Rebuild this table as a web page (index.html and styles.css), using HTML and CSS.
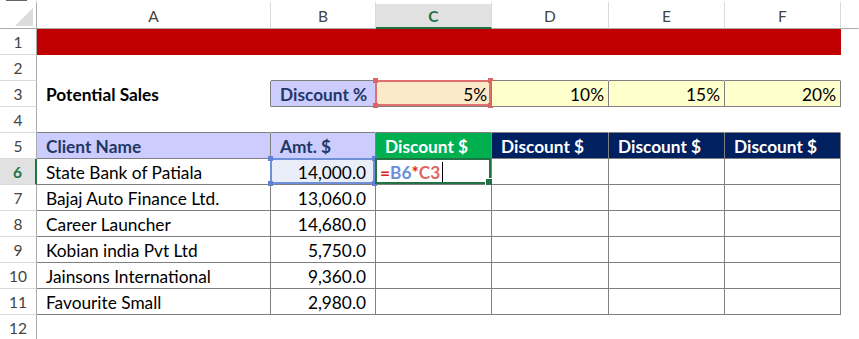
FILE: index.html
```html
<!DOCTYPE html>
<html>
<head>
<meta charset="utf-8">
<link rel="stylesheet" href="styles.css">
</head>
<body>
<div class="sheet">
  <!-- header row -->
  <div class="c ch corner"><svg class="tri" width="18" height="18" viewBox="0 0 18 18"><polygon points="18,0 18,18 0,18" fill="#dcdcdc"/></svg></div>
  <div class="c ch">A</div>
  <div class="c ch">B</div>
  <div class="c ch sel-col">C</div>
  <div class="c ch">D</div>
  <div class="c ch">E</div>
  <div class="c ch">F</div>
  <div class="c ch end"></div>

  <!-- row 1 -->
  <div class="c rh">1</div>
  <div class="c red"></div><div class="c red"></div><div class="c red"></div><div class="c red"></div><div class="c red"></div><div class="c red"></div>
  <div class="c"></div>

  <!-- row 2 -->
  <div class="c rh">2</div>
  <div class="c"></div><div class="c bb"></div><div class="c bb"></div><div class="c bb"></div><div class="c bb"></div><div class="c bb"></div>
  <div class="c"></div>

  <!-- row 3 -->
  <div class="c rh">3</div>
  <div class="c br bold">Potential Sales</div>
  <div class="c box lav navy bold">Discount %</div>
  <div class="c box peach num pct">5%<span class="ref red-ref"><i class="h tl"></i><i class="h tr"></i><i class="h bl"></i><i class="h br2"></i></span></div>
  <div class="c box yel num pct">10%</div>
  <div class="c box yel num pct">15%</div>
  <div class="c box yel num pct">20%</div>
  <div class="c"></div>

  <!-- row 4 -->
  <div class="c rh">4</div>
  <div class="c bb"></div><div class="c bb"></div><div class="c bb"></div><div class="c bb"></div><div class="c bb"></div><div class="c bb"></div>
  <div class="c"></div>

  <!-- row 5 -->
  <div class="c rh">5</div>
  <div class="c box lav navy bold">Client Name</div>
  <div class="c box lav navy bold">Amt. $</div>
  <div class="c box green wh bold">Discount $</div>
  <div class="c box navybg wh bold">Discount $</div>
  <div class="c box navybg wh bold">Discount $</div>
  <div class="c box navybg wh bold">Discount $</div>
  <div class="c"></div>

  <!-- row 6 -->
  <div class="c rh sel-row">6</div>
  <div class="c box">State Bank of Patiala</div>
  <div class="c box num bluefill">14,000.0<span class="ref blue-ref"><i class="h tl"></i><i class="h tr"></i><i class="h bl"></i><i class="h br2"></i></span></div>
  <div class="c box formula"><span class="f-eq">=</span><span class="f-b">B6</span><span class="f-op">*</span><span class="f-c">C3</span><span class="caret"></span><span class="active"><i class="h br2"></i></span></div>
  <div class="c box"></div><div class="c box"></div><div class="c box"></div>
  <div class="c"></div>

  <!-- row 7 -->
  <div class="c rh">7</div>
  <div class="c box">Bajaj Auto Finance Ltd.</div>
  <div class="c box num">13,060.0</div>
  <div class="c box"></div><div class="c box"></div><div class="c box"></div><div class="c box"></div>
  <div class="c"></div>

  <!-- row 8 -->
  <div class="c rh">8</div>
  <div class="c box">Career Launcher</div>
  <div class="c box num">14,680.0</div>
  <div class="c box"></div><div class="c box"></div><div class="c box"></div><div class="c box"></div>
  <div class="c"></div>

  <!-- row 9 -->
  <div class="c rh">9</div>
  <div class="c box">Kobian india Pvt Ltd</div>
  <div class="c box num">5,750.0</div>
  <div class="c box"></div><div class="c box"></div><div class="c box"></div><div class="c box"></div>
  <div class="c"></div>

  <!-- row 10 -->
  <div class="c rh">10</div>
  <div class="c box">Jainsons International</div>
  <div class="c box num">9,360.0</div>
  <div class="c box"></div><div class="c box"></div><div class="c box"></div><div class="c box"></div>
  <div class="c"></div>

  <!-- row 11 -->
  <div class="c rh">11</div>
  <div class="c box">Favourite Small</div>
  <div class="c box num">2,980.0</div>
  <div class="c box"></div><div class="c box"></div><div class="c box"></div><div class="c box"></div>
  <div class="c"></div>

  <!-- row 12 -->
  <div class="c rh">12</div>
  <div class="c"></div><div class="c"></div><div class="c"></div><div class="c"></div><div class="c"></div><div class="c"></div>
  <div class="c"></div>
</div>
</body>
</html>
```
FILE: styles.css
```css
html, body {
  margin: 0;
  padding: 0;
  background: #fff;
  overflow: hidden;
}
body {
  font-family: Lato, "Open Sans", sans-serif;
  font-size: 17.3px;
  color: #000;
}
.sheet {
  display: grid;
  grid-template-columns: 37px 234px 105px 116px 117px 116px 116px 18px;
  grid-template-rows: 29px repeat(12, 26px);
  width: 859px;
}
.c {
  box-sizing: border-box;
  border-right: 1px solid transparent;
  border-bottom: 1px solid transparent;
  display: flex;
  align-items: center;
  padding: 1px 9px 0 9px;
  white-space: nowrap;
  position: relative;
}
/* column headers */
.ch {
  justify-content: center;
  color: #444;
  font-size: 15.5px;
  border-top: 4px solid #fff;
  border-right-color: #dadada;
  border-bottom-color: #ababab;
  padding: 0;
}
.ch.end { border-right-color: transparent; }
.corner { border-right-color: #ababab; }
.tri {
  position: absolute;
  right: 3px;
  bottom: 2px;
}
.corner::before {
  content: "";
  position: absolute;
  top: -4px;
  left: 6px;
  width: 21px;
  height: 1px;
  background: #666;
}
.sel-col {
  background: #e1e1e1;
  color: #217346;
  font-weight: 700;
  border-bottom: 2px solid #217346;
}
/* row headers */
.rh {
  justify-content: center;
  color: #444;
  font-size: 15.5px;
  border-right-color: #ababab;
  border-bottom-color: #dadada;
  padding: 1px 0 0 0;
}
.sel-row {
  background: #e1e1e1;
  color: #217346;
  font-weight: 700;
  border-right: 2px solid #217346;
}
/* fills */
.red { background: #c00000; }
.lav { background: #ccccff; }
.peach { background: #fce9c8; }
.yel { background: #ffffcc; }
.green { background: #00b050; }
.navybg { background: #002060; }
.bluefill { background: #e9eef9; }
.navy { color: #1f3864; }
.wh { color: #fff; }
.bold { font-weight: 700; }
/* borders */
.bb { border-bottom-color: #808080; }
.br { border-right-color: #808080; }
.box { border-right-color: #808080; border-bottom-color: #808080; }
.num { justify-content: flex-end; }
.pct { padding-right: 4px; }
/* highlight overlays */
.ref {
  position: absolute;
  left: -1px;
  top: -1px;
  right: 0;
  bottom: 0;
  border: 2px solid;
  box-sizing: border-box;
}
.red-ref { border-color: #e07070; color: #dc6464; }
.blue-ref { border-color: #6f8fd8; color: #5f82d2; }
.h {
  position: absolute;
  width: 5px;
  height: 5px;
  background: currentColor;
}
.tl { left: -4px; top: -4px; }
.tr { right: -4px; top: -4px; }
.bl { left: -4px; bottom: -4px; }
.br2 { right: -4px; bottom: -4px; }
.formula {
  padding-left: 4px;
  font-weight: 700;
}
.f-eq { color: #e02020; }
.f-b { color: #6a8ed8; }
.f-op { color: #e02828; }
.f-c { color: #e06666; }
.caret {
  display: inline-block;
  width: 1px;
  height: 21px;
  background: #000;
  margin-left: 2px;
}
.active {
  position: absolute;
  left: -1px;
  top: -1px;
  right: 0;
  bottom: 0;
  border: 2px solid #217346;
  color: #217346;
  box-sizing: border-box;
}
.active .br2 { right: -4px; bottom: -4px; width: 6px; height: 6px; border: 1px solid #fff; box-sizing: content-box; }
```
